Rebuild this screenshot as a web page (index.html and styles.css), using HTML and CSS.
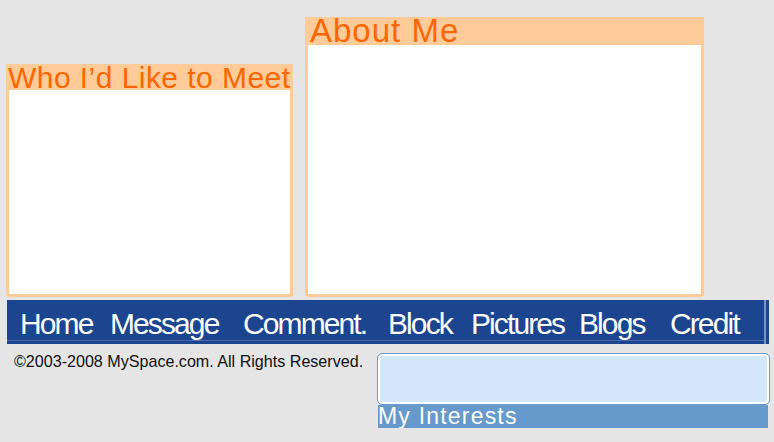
FILE: index.html
```html
<!DOCTYPE html>
<html lang="en">
<head>
  <meta charset="UTF-8">
  <title>Profile</title>
  <link rel="stylesheet" href="styles.css">
</head>
<body>
  <div class="top">
    <div class="box box-meet">
      <div class="box-head">Who I’d Like to Meet</div>
      <div class="box-body"></div>
    </div>
    <div class="box box-about">
      <div class="box-head">About Me</div>
      <div class="box-body"></div>
    </div>
  </div>

  <ul class="nav">
    <li>Home</li>
    <li>Message</li>
    <li>Comment.</li>
    <li>Block</li>
    <li>Pictures</li>
    <li>Blogs</li>
    <li>Credit</li>
  </ul>

  <div class="bottom">
    <p class="copy">©2003-2008 MySpace.com. All Rights Reserved.</p>
    <div class="interests">
      <div class="interests-panel"></div>
      <div class="interests-head">My Interests</div>
    </div>
  </div>
</body>
</html>
```

FILE: styles.css
```css
* {
  box-sizing: border-box;
}

body {
  margin: 0;
  background-color: #e5e5e5;
  font-family: "Liberation Sans", Arial, sans-serif;
}

.top {
  display: flex;
  align-items: flex-end;
  gap: 12px;
  padding: 17px 0 0 6px;
}

.box {
  display: flex;
  flex-direction: column;
  background-color: #fff;
  border: 3px solid #ffcc99;
  border-top: 0;
  border-radius: 0 0 4px 4px;
}

.box-head {
  margin: 0 -3px;
  background-color: #ffcc99;
  color: #ff6600;
  white-space: nowrap;
}

.box-body {
  flex: 1;
}

.box-meet {
  width: 287px;
  height: 233px;
}

.box-meet .box-head {
  height: 26px;
  padding-left: 2px;
  font-size: 30px;
  line-height: 28px;
  letter-spacing: 0.45px;
}

.box-about {
  width: 399px;
  height: 280px;
}

.box-about .box-head {
  height: 28px;
  padding-left: 5px;
  font-size: 33px;
  line-height: 28px;
  letter-spacing: 1px;
}

.nav {
  display: grid;
  grid-template-columns: 90px 133px 145px 83px 108px 91px auto;
  width: 762px;
  height: 44px;
  margin: 3px 0 0 7px;
  padding: 4px 0 0 13px;
  list-style: none;
  background-color: #1c4590;
  box-shadow: inset -3px 0 0 #1c4590, inset -5px 0 0 #7d93bf, inset 0 -3px 0 #1c4590, inset 0 -4px 0 #4a69a8;
  color: #fff;
  font-size: 30px;
  line-height: 40px;
  letter-spacing: -1.9px;
}

.bottom {
  display: flex;
}

.copy {
  width: 377px;
  margin: 8px 0 0;
  padding-left: 14px;
  color: #111;
  font-size: 16.1px;
  line-height: 18px;
}

.interests {
  width: 393px;
  margin-top: 9px;
}

.interests-panel {
  height: 52px;
  background-color: #d4e6fa;
  border: 1px solid #6a9bd0;
  border-radius: 5px;
  box-shadow: inset 0 0 0 2px #fff;
}

.interests-head {
  height: 23px;
  margin: 0 2px 0 1px;
  background-color: #6699cc;
  color: #fff;
  font-size: 23px;
  line-height: 23px;
  letter-spacing: 1.2px;
  white-space: nowrap;
}
```
